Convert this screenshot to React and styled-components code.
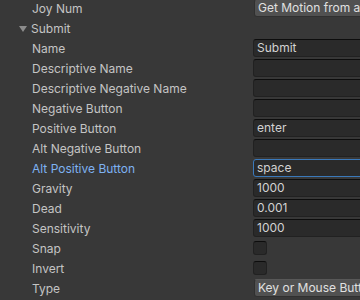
import React from "react";
import styled, { createGlobalStyle } from "styled-components";

const Global = createGlobalStyle`
  html, body { margin: 0; padding: 0; background: #383838; overflow: hidden; }
  body { width: 360px; height: 300px; font-family: Inter, "Noto Sans", sans-serif; }
`;

const Panel = styled.div`
  width: 360px;
  height: 300px;
  overflow: hidden;
  background: #383838;
`;

const List = styled.div`
  display: flex;
  flex-direction: column;
  gap: 2px;
  margin-top: -1px;
`;

const Row = styled.div`
  display: grid;
  grid-template-columns: 253px 130px;
  height: 18px;
  align-items: center;
`;

const Label = styled.div`
  padding-left: ${(p) => p.$indent}px;
  font-size: 12px;
  color: ${(p) => (p.$active ? "#7eb2f2" : "#c4c4c4")};
  white-space: nowrap;
  overflow: hidden;
  display: flex;
  align-items: center;
  gap: 4px;
`;

const Arrow = styled.span`
  width: 0;
  height: 0;
  border-left: 4px solid transparent;
  border-right: 4px solid transparent;
  border-top: 6px solid #8c8c8c;
  margin-top: 1px;
`;

const Field = styled.div`
  box-sizing: border-box;
  height: 18px;
  background: #2a2a2a;
  border: 1px solid ${(p) => (p.$focus ? "#3a79bb" : "#212121")};
  border-top-color: ${(p) => (p.$focus ? "#3a79bb" : "#0d0d0d")};
  border-radius: 3px;
  padding-left: 3px;
  font-size: 12px;
  line-height: 16px;
  color: #d2d2d2;
  white-space: nowrap;
`;

const Popup = styled.div`
  box-sizing: border-box;
  height: 18px;
  margin-left: 1px;
  background: #515151;
  border: 1px solid #303030;
  border-top-color: #585858;
  border-radius: 3px;
  padding-left: 3px;
  font-size: 12px;
  line-height: 16px;
  color: #e0e0e0;
  white-space: nowrap;
`;

const Check = styled.div`
  box-sizing: border-box;
  width: 14px;
  height: 14px;
  background: #2a2a2a;
  border: 1px solid #212121;
  border-top-color: #0d0d0d;
  border-radius: 3px;
`;

const rows = [
  { label: "Joy Num", indent: 32, kind: "popup", value: "Get Motion from all Joysticks" },
  { label: "Submit", indent: 19, kind: "fold" },
  { label: "Name", indent: 32, kind: "field", value: "Submit" },
  { label: "Descriptive Name", indent: 32, kind: "field", value: "" },
  { label: "Descriptive Negative Name", indent: 32, kind: "field", value: "" },
  { label: "Negative Button", indent: 32, kind: "field", value: "" },
  { label: "Positive Button", indent: 32, kind: "field", value: "enter" },
  { label: "Alt Negative Button", indent: 32, kind: "field", value: "" },
  { label: "Alt Positive Button", indent: 32, kind: "field", value: "space", focus: true },
  { label: "Gravity", indent: 32, kind: "field", value: "1000" },
  { label: "Dead", indent: 32, kind: "field", value: "0.001" },
  { label: "Sensitivity", indent: 32, kind: "field", value: "1000" },
  { label: "Snap", indent: 32, kind: "check" },
  { label: "Invert", indent: 32, kind: "check" },
  { label: "Type", indent: 32, kind: "popup", value: "Key or Mouse Button" },
];

export default function App() {
  return (
    <Panel>
      <Global />
      <List>
        {rows.map((r) => (
          <Row key={r.label}>
            <Label $indent={r.indent} $active={r.focus}>
              {r.kind === "fold" && <Arrow />}
              {r.label}
            </Label>
            {r.kind === "field" && <Field $focus={r.focus}>{r.value}</Field>}
            {r.kind === "popup" && <Popup>{r.value}</Popup>}
            {r.kind === "check" && <Check />}
            {r.kind === "fold" && <div />}
          </Row>
        ))}
      </List>
    </Panel>
  );
}
